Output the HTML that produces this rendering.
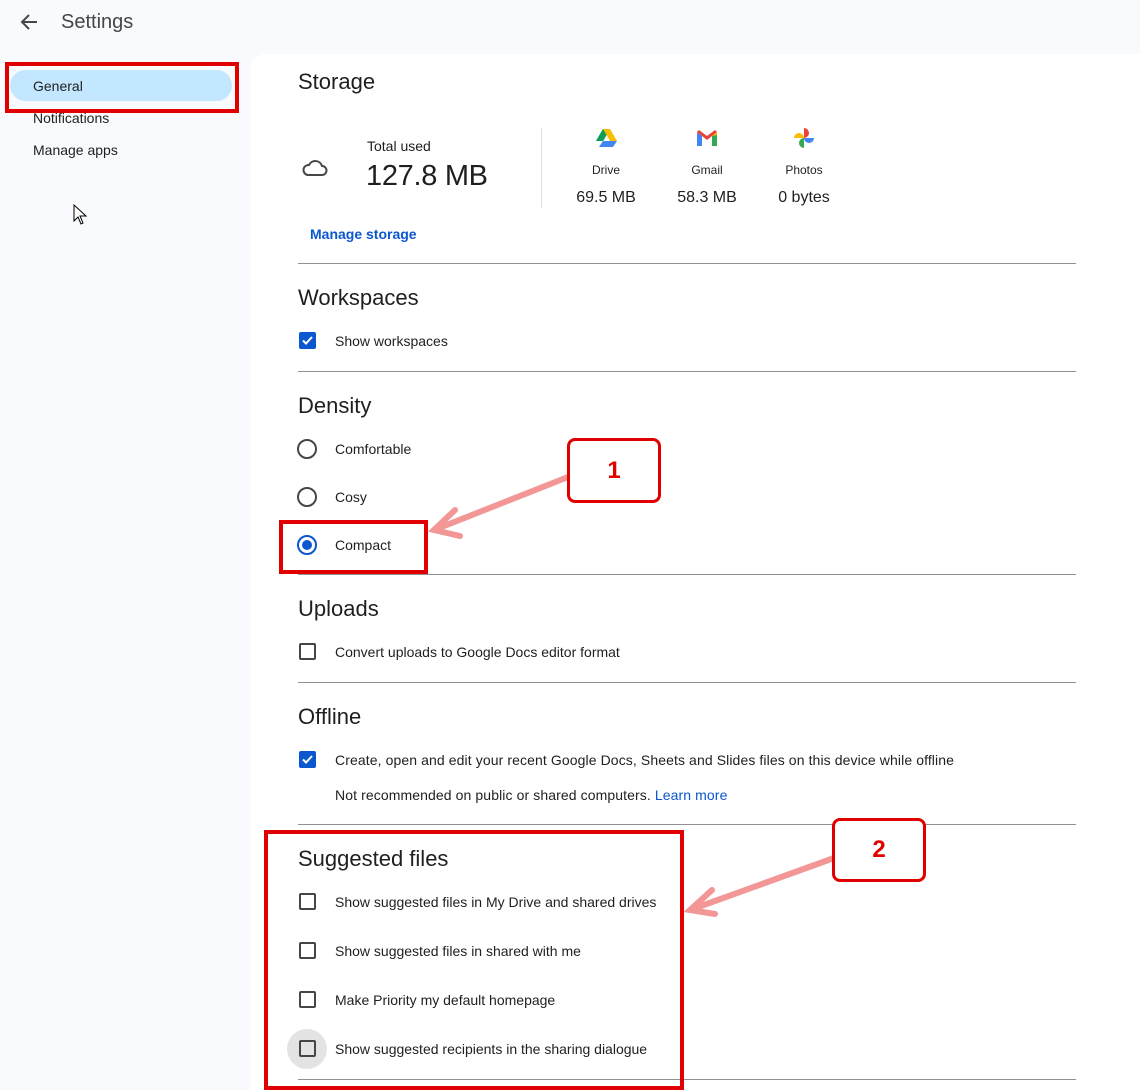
<!DOCTYPE html>
<html><head><meta charset="utf-8"><style>
*{margin:0;padding:0;box-sizing:border-box}
body{width:1140px;height:1090px;background:#f8fafd;font-family:"Liberation Sans",Arial,sans-serif;color:#1f1f1f;position:relative;overflow:hidden}
.a{position:absolute;white-space:nowrap}
.panel{position:absolute;left:250px;top:54px;right:0;bottom:0;background:#fff;border-top-left-radius:16px}
.h{font-size:22px;color:#1f1f1f;line-height:24px}
.l{font-size:14px;line-height:16px;color:#1f1f1f}
.hr{position:absolute;left:298px;width:778px;height:1px;background:#8e918f}
.cb{position:absolute;left:299px;width:17px;height:17px;border:2px solid #444746;border-radius:2px}
.cbon{background:#0b57d0;border-color:#0b57d0}
.rd{position:absolute;left:297px;width:20px;height:20px;border:2px solid #444746;border-radius:50%}
.red{position:absolute;border:4px solid #e00000}
.rb{position:absolute;border:3px solid #e00000;border-radius:8px;background:#fff;color:#e00000;font-weight:bold;font-size:24px;text-align:center}
</style></head><body>
<svg class="a" style="left:18px;top:12px" width="22" height="20" viewBox="0 0 22 20"><path d="M19 10H4M11 3L4 10l7 7" stroke="#444746" stroke-width="2" fill="none"/></svg>
<div class="a" style="left:61px;top:11px;font-size:20px;color:#444746">Settings</div>
<div class="a" style="left:10px;top:70px;width:222px;height:31px;background:#c2e7ff;border-radius:16px"></div>
<div class="red" style="left:5px;top:62px;width:234px;height:51px"></div>
<div class="a l" style="left:33px;top:78px">General</div>
<div class="a l" style="left:33px;top:110px">Notifications</div>
<div class="a l" style="left:33px;top:142px">Manage apps</div>
<svg class="a" style="left:72px;top:204px" width="16" height="22" viewBox="0 0 16 22"><path d="M2 1v16l4-4 3 7 2-1-3-7h6z" fill="#fff" stroke="#000" stroke-width="1"/></svg>
<div class="panel"></div>
<div class="a h" style="left:298px;top:70px">Storage</div>
<svg class="a" style="left:301px;top:157px" width="27" height="20" viewBox="0 0 27 20"><path d="M7 18h14a4.5 4.5 0 0 0 0-9 7 7 0 0 0-13-1A5 5 0 0 0 7 18z" fill="none" stroke="#444746" stroke-width="2"/></svg>
<div class="a l" style="left:367px;top:138px">Total used</div>
<div class="a" style="left:366px;top:159px;font-size:29px;line-height:34px;letter-spacing:-0.3px">127.8 MB</div>
<div class="a" style="left:541px;top:128px;width:1px;height:80px;background:#e0e0e0"></div>
<svg class="a" style="left:595px;top:128px" width="23" height="20" viewBox="0 0 23 20"><path d="M8 1h7l-7 12H1z" fill="#0f9d58"/><path d="M8 1h7l7 12h-7z" fill="#fbbc04"/><path d="M4 19l4-6h14l-4 6z" fill="#4285f4"/><path d="M8 1l3.5 6L8 13H1z" fill="#0f9d58"/></svg>
<svg class="a" style="left:696px;top:129px" width="22" height="17" viewBox="0 0 22 17"><path d="M1 3v14h5V7z" fill="#4285f4"/><path d="M21 3v14h-5V7z" fill="#34a853"/><path d="M1 3l10 8 10-8-2-2-8 6-8-6z" fill="#ea4335"/><path d="M16 7l5-4v3z" fill="#fbbc04"/></svg>
<svg class="a" style="left:793px;top:127px" width="22" height="22" viewBox="0 0 22 22"><path d="M11 11V1a5 5 0 0 1 0 10z" fill="#ea4335"/><path d="M11 11h10a5 5 0 0 1-10 0z" fill="#4285f4"/><path d="M11 11v10a5 5 0 0 1 0-10z" fill="#34a853"/><path d="M11 11H1a5 5 0 0 1 10 0z" fill="#fbbc04"/></svg>
<div class="a" style="left:576px;top:163px;width:60px;text-align:center;font-size:12px">Drive</div>
<div class="a" style="left:677px;top:163px;width:60px;text-align:center;font-size:12px">Gmail</div>
<div class="a" style="left:774px;top:163px;width:60px;text-align:center;font-size:12px">Photos</div>
<div class="a" style="left:566px;top:189px;width:80px;text-align:center;font-size:16px">69.5 MB</div>
<div class="a" style="left:667px;top:189px;width:80px;text-align:center;font-size:16px">58.3 MB</div>
<div class="a" style="left:764px;top:189px;width:80px;text-align:center;font-size:16px">0 bytes</div>
<div class="a l" style="left:310px;top:226px;color:#0b57d0;font-weight:bold">Manage storage</div>
<div class="hr" style="top:263px"></div>
<div class="a h" style="left:298px;top:286px">Workspaces</div>
<div class="cb cbon" style="top:332px"><svg width="13" height="13" viewBox="0 0 13 13" style="position:absolute;left:0;top:0"><path d="M2 6.5l3 3 6-6.5" stroke="#fff" stroke-width="2" fill="none"/></svg></div>
<div class="a l" style="left:335px;top:333px">Show workspaces</div>
<div class="hr" style="top:371px"></div>
<div class="a h" style="left:298px;top:394px">Density</div>
<div class="rd" style="top:439px"></div>
<div class="a l" style="left:335px;top:441px">Comfortable</div>
<div class="rd" style="top:487px"></div>
<div class="a l" style="left:335px;top:489px">Cosy</div>
<div class="rd" style="top:535px;border-color:#0b57d0"><div style="position:absolute;left:3px;top:3px;width:10px;height:10px;border-radius:50%;background:#0b57d0"></div></div>
<div class="a l" style="left:335px;top:537px">Compact</div>
<div class="hr" style="top:574px"></div>
<div class="a h" style="left:298px;top:597px">Uploads</div>
<div class="cb" style="top:643px"></div>
<div class="a l" style="left:335px;top:644px">Convert uploads to Google Docs editor format</div>
<div class="hr" style="top:682px"></div>
<div class="a h" style="left:298px;top:705px">Offline</div>
<div class="cb cbon" style="top:751px"><svg width="13" height="13" viewBox="0 0 13 13" style="position:absolute;left:0;top:0"><path d="M2 6.5l3 3 6-6.5" stroke="#fff" stroke-width="2" fill="none"/></svg></div>
<div class="a l" style="left:335px;top:752px;letter-spacing:0.1px">Create, open and edit your recent Google Docs, Sheets and Slides files on this device while offline</div>
<div class="a l" style="left:335px;top:787px;letter-spacing:0.1px">Not recommended on public or shared computers. <span style="color:#0b57d0">Learn more</span></div>
<div class="hr" style="top:824px"></div>
<div class="a h" style="left:298px;top:847px">Suggested files</div>
<div class="cb" style="top:893px"></div>
<div class="a l" style="left:335px;top:894px">Show suggested files in My Drive and shared drives</div>
<div class="cb" style="top:942px"></div>
<div class="a l" style="left:335px;top:943px">Show suggested files in shared with me</div>
<div class="cb" style="top:991px"></div>
<div class="a l" style="left:335px;top:992px">Make Priority my default homepage</div>
<div class="a" style="left:287px;top:1029px;width:40px;height:40px;border-radius:50%;background:#e3e3e3"></div>
<div class="cb" style="top:1040px"></div>
<div class="a l" style="left:335px;top:1041px">Show suggested recipients in the sharing dialogue</div>
<div class="hr" style="top:1079px"></div>
<div class="red" style="left:279px;top:520px;width:149px;height:54px"></div>
<div class="red" style="left:264px;top:830px;width:420px;height:260px"></div>
<svg class="a" style="left:0;top:0" width="1140" height="1090"><g stroke="#f29696" stroke-width="6" fill="none" stroke-linecap="round"><path d="M568 477L434 530M455 510L434 530 460 536"/><path d="M834 858L690 910M712 890L690 910 715 914"/></g></svg>
<div class="rb" style="left:567px;top:438px;width:94px;height:65px;line-height:59px">1</div>
<div class="rb" style="left:832px;top:818px;width:94px;height:64px;line-height:58px">2</div>
</body></html>
